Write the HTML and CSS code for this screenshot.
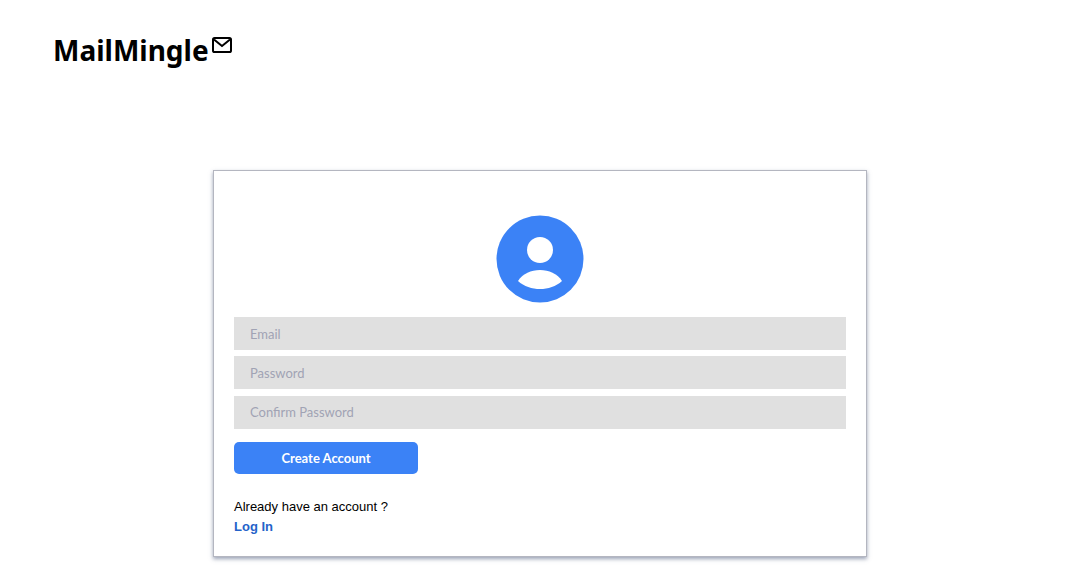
FILE: index.html
```html
<!DOCTYPE html>
<html lang="en">
<head>
<meta charset="utf-8">
<title>MailMingle</title>
<link rel="stylesheet" href="styles.css">
</head>
<body>
<header class="brand">
  <h1 class="brand-name">MailMingle</h1>
  <svg class="brand-icon" viewBox="0 0 20 16" width="20" height="16" aria-hidden="true">
    <rect x="1" y="1" width="18" height="14" rx="1.6" fill="none" stroke="#000" stroke-width="2"/>
    <path d="M2 2.5 10 9l8-6.500" fill="none" stroke="#000" stroke-width="2"/>
  </svg>
</header>
<main class="main">
  <form class="card">
    <div class="avatar-row">
      <svg class="avatar" viewBox="0 0 88 88" width="88" height="88" aria-hidden="true">
        <circle cx="44" cy="44" r="43.500" fill="#3b82f6"/>
        <circle cx="44" cy="35" r="13" fill="#fff"/>
        <path d="M22 66C27 58.500 35 55 44 55S61 58.500 66 66C60 71.500 52 74 44 74S28 71.500 22 66Z" fill="#fff"/>
      </svg>
    </div>
    <div class="fields">
      <input class="field" type="email" placeholder="Email">
      <input class="field" type="password" placeholder="Password">
      <input class="field" type="password" placeholder="Confirm Password">
    </div>
    <button class="submit" type="button">Create Account</button>
    <p class="prompt">Already have an account ?</p>
    <a class="login" href="#">Log In</a>
  </form>
</main>
</body>
</html>
```
FILE: styles.css
```css
* { box-sizing: border-box; }
html, body { margin: 0; padding: 0; }
body {
  background: #fff;
  color: #000;
  font-family: "Liberation Sans", Arial, sans-serif;
  height: 577px;
  overflow: hidden;
}
.brand {
  display: flex;
  align-items: flex-start;
  padding: 31px 53px 0;
  height: 170px;
}
.brand-name {
  margin: 0;
  font-family: "Noto Sans", "Open Sans", sans-serif;
  font-size: 28px;
  line-height: 38px;
  font-weight: 700;
}
.brand-icon {
  margin: 6px 0 0 3px;
}
.main {
  display: flex;
  justify-content: center;
}
.card {
  width: 654px;
  height: 387px;
  padding: 44px 20px 0;
  background: #fff;
  border: 1px solid #b4b6c0;
  box-shadow: 0 2px 4px rgba(71, 85, 120, 0.55);
}
.avatar-row {
  display: flex;
  justify-content: center;
  margin-bottom: 14px;
}
.avatar { display: block; }
.fields {
  display: flex;
  flex-direction: column;
  gap: 6.400px;
}
.field {
  display: block;
  width: 100%;
  height: 33px;
  padding: 0 16px;
  border: 0;
  border-radius: 0;
  outline: 0;
  background: #e0e0e0;
  font-family: "Lato", "Noto Sans", sans-serif;
  font-size: 13px;
  color: #333;
}
.field::placeholder {
  color: #a0a3b4;
  opacity: 1;
}
.submit {
  display: block;
  width: 184px;
  height: 32px;
  margin-top: 13.200px;
  border: 0;
  border-radius: 5px;
  background: #3b82f6;
  color: #fff;
  font-family: "Lato", "Noto Sans", sans-serif;
  font-size: 13px;
  font-weight: 700;
  padding: 0;
}
.prompt {
  margin: 24px 0 0;
  font-size: 13px;
  line-height: 17px;
}
.login {
  display: block;
  margin-top: 3px;
  font-size: 13px;
  line-height: 17px;
  font-weight: 700;
  color: #2563c9;
  text-decoration: none;
}
```
